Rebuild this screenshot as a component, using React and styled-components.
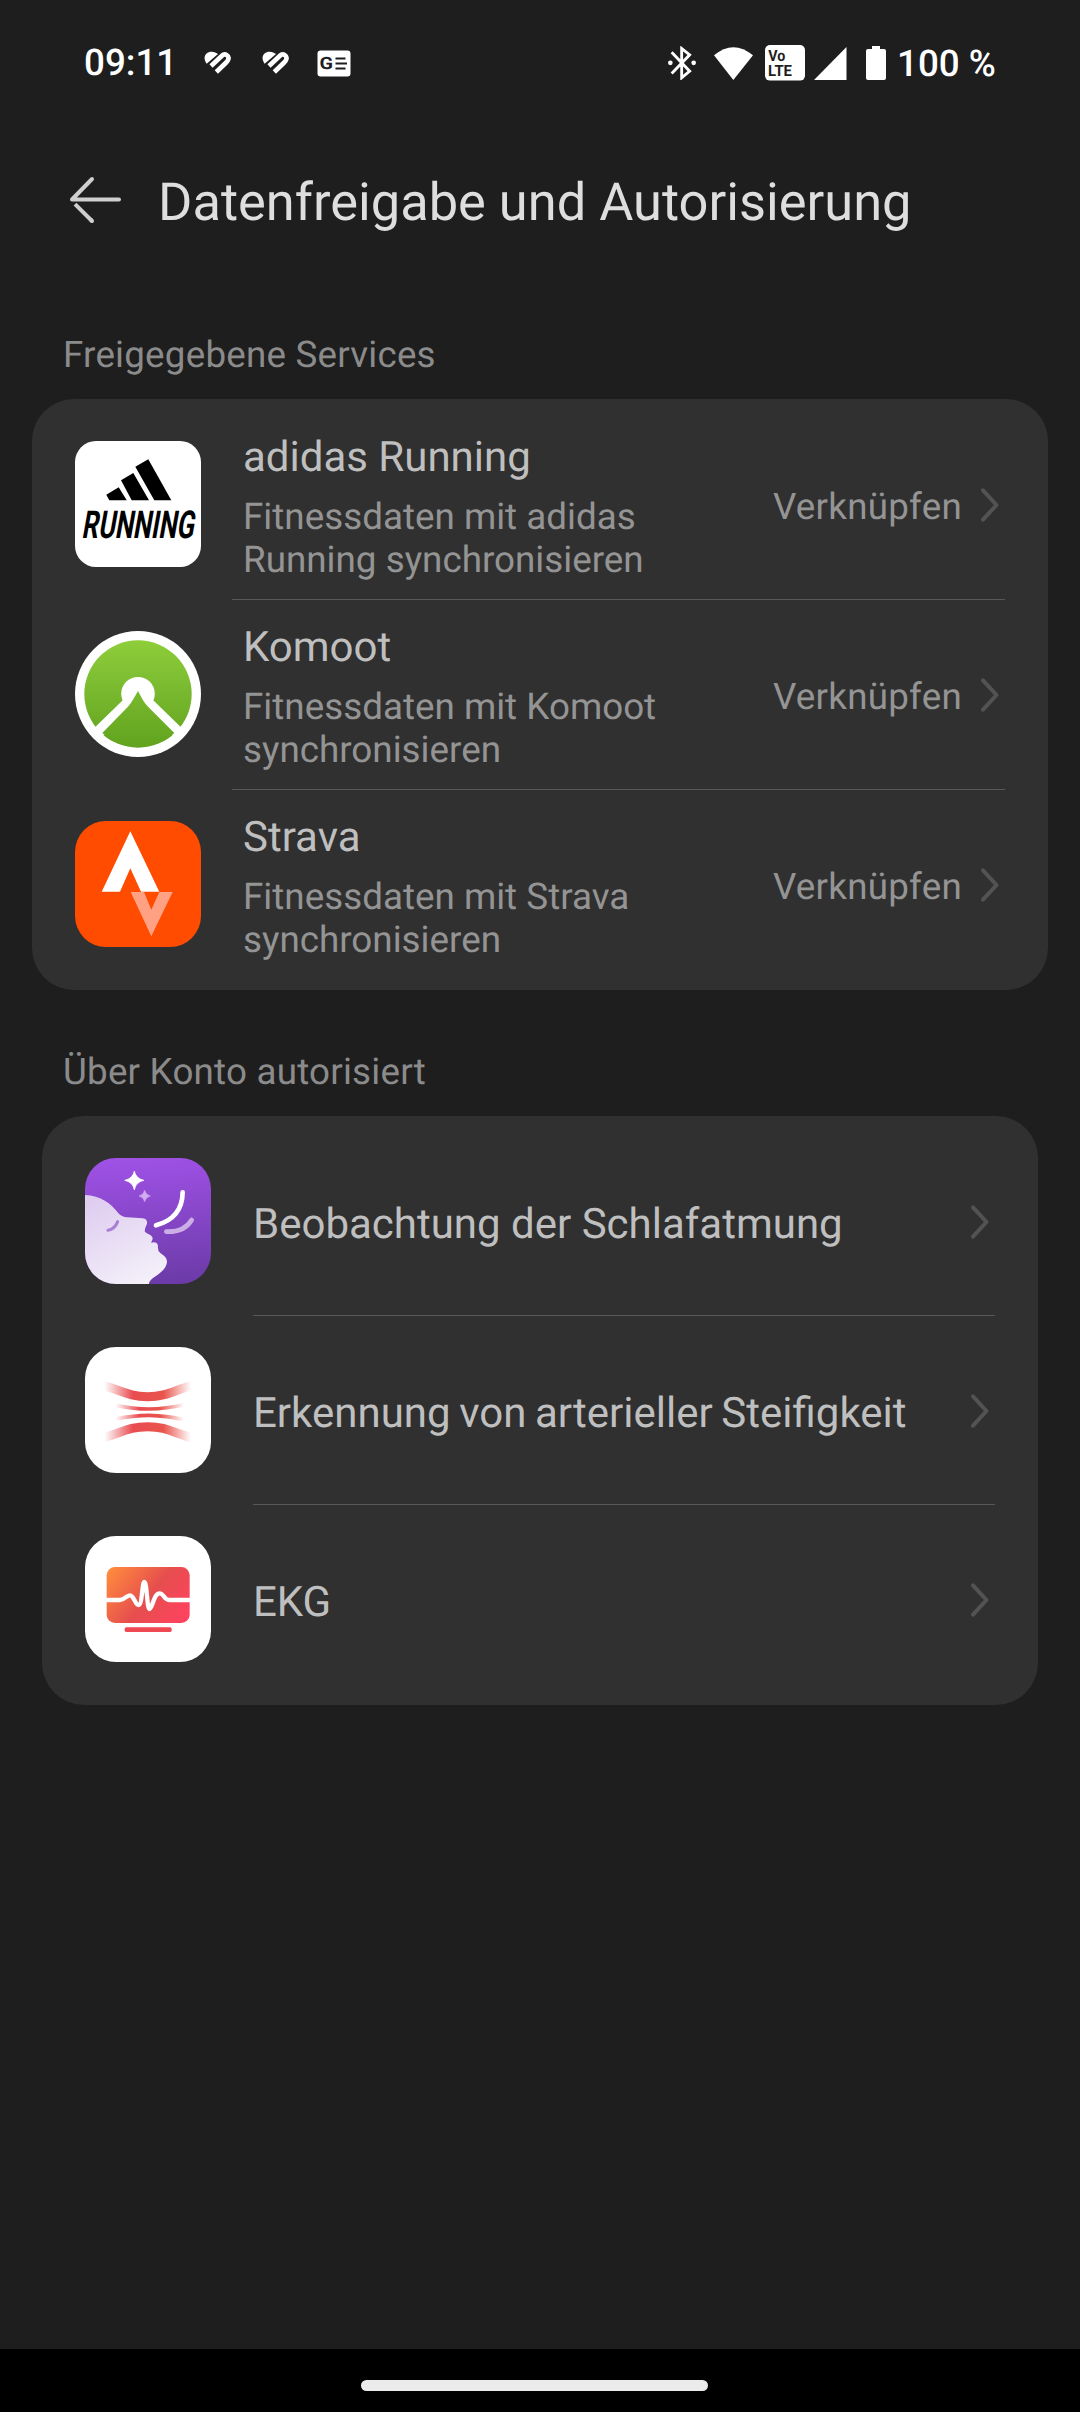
import React from "react";
import styled, { createGlobalStyle } from "styled-components";

const GlobalStyle = createGlobalStyle`
  *, *::before, *::after { box-sizing: border-box; }
  body {
    margin: 0;
    background: #1e1e1e;
    font-family: Roboto, "Noto Sans", sans-serif;
    text-rendering: geometricPrecision;
    font-variant-ligatures: common-ligatures;
  }
  svg { display: block; flex: none; }
`;

const Screen = styled.div`
  width: 1080px;
  height: 2412px;
  display: flex;
  flex-direction: column;
  background: #1e1e1e;
  overflow: hidden;
`;

const StatusBar = styled.div`
  height: 126px;
  padding: 0 84px;
  display: flex;
  justify-content: space-between;
  align-items: center;
  color: #fff;
  font-size: 36.75px;
  font-weight: 500;
  line-height: 44px;
`;

const StatusGroup = styled.div`
  display: flex;
  align-items: center;
`;

const StatusText = styled.span`
  white-space: nowrap;
  width: ${(p) => p.$width}px;
  margin-left: ${(p) => p.$gap || 0}px;
  padding-top: ${(p) => p.$drop || 0}px;
`;

const StatusIcon = styled.svg`
  margin-left: ${(p) => p.$gap || 0}px;
`;

const Header = styled.header`
  height: 150px;
  padding: 0 70px;
  display: flex;
  align-items: center;
  gap: 36px;
`;

const Title = styled.h1`
  margin: 0;
  color: #dedede;
  font-size: 52.4px;
  font-weight: 400;
  line-height: 63px;
  padding-top: 2px;
  white-space: nowrap;
`;

const Content = styled.main`
  flex: 1;
  display: flex;
  flex-direction: column;
`;

const SectionLabel = styled.h2`
  margin: ${(p) => p.$top}px 63px 23px;
  color: #8b8b8b;
  font-size: 36.75px;
  font-weight: 400;
  letter-spacing: 0.22px;
  line-height: 42px;
`;

const Card = styled.section`
  margin: 0 ${(p) => p.$inset}px;
  padding: 11px 43px;
  height: ${(p) => p.$height}px;
  border-radius: 42px;
  background: #303030;
`;

const Divider = styled.div`
  height: 1px;
  background: #575757;
  margin-left: ${(p) => p.$left}px;
`;

const Row = styled.div`
  height: ${(p) => p.$height}px;
  padding-bottom: ${(p) => p.$lift || 0}px;
  display: flex;
  align-items: center;
`;

const AppIcon = styled.svg`
  width: 126px;
  height: 126px;
  overflow: visible;
  border-radius: ${(p) => p.$radius}px;
  background: ${(p) => p.$bg || "#fff"};
  ${(p) => p.$clip && "overflow: hidden;"}
`;

const RowText = styled.div`
  flex: 1;
  margin-left: 42px;
  padding-top: ${(p) => p.$drop}px;
`;

const RowTitle = styled.div`
  color: #bfbfbf;
  font-size: 42px;
  line-height: 49px;
  white-space: nowrap;
  word-spacing: ${(p) => p.$wordSpacing || 0}px;
`;

const RowDetail = styled.div`
  margin-top: 13px;
  width: 460px;
  color: #949494;
  font-size: 36.8px;
  line-height: 43px;
`;

const RowAction = styled.div`
  color: #949494;
  font-size: 36.75px;
  letter-spacing: 0.25px;
  line-height: 42px;
  padding-top: 5px;
  margin-right: 18px;
`;

const ChevronBox = styled.svg`
  margin-right: 5px;
  margin-top: 1px;
`;

const NavBar = styled.footer`
  height: 63px;
  background: #000;
  display: flex;
  justify-content: center;
  padding-top: 31px;
  padding-right: 11px;
`;

const NavHandle = styled.div`
  width: 347px;
  height: 11px;
  border-radius: 6px;
  background: #ebebeb;
`;

const Chevron = () => (
  <ChevronBox width="20" height="36" viewBox="0 0 20 36" fill="none">
    <path d="M3 3.3 16.5 18 3 32.7" stroke="#535353" strokeWidth="4" strokeLinecap="round" strokeLinejoin="round" />
  </ChevronBox>
);

const HealthGlyph = ({ gap }) => (
  <StatusIcon $gap={gap} width="27" height="24" viewBox="433 93 81 72">
    <path d="M441 131 C427 112 438 95 456 95 C464 95 470 98 475 102 Z" fill="#fff" />
    <path d="M454 138 L486 108 C496 98 511 107 505 120 C504 123 501 126 498 129 L470 156" fill="none" stroke="#fff" strokeWidth="14" />
  </StatusIcon>
);

const NewsGlyph = () => (
  <StatusIcon $gap={28} width="34" height="27" viewBox="0 0 34 27">
    <rect x="0.5" y="0.5" width="33" height="26" rx="3" fill="#fff" />
    <text x="2.6" y="19.2" fontFamily="Roboto, sans-serif" fontWeight="700" fontSize="17" textLength="13.5" lengthAdjust="spacingAndGlyphs" fill="#1e1e1e">G</text>
    <path d="M18.5 8.5h10M18.5 13.5h11.5M18.5 18.5h10" stroke="#1e1e1e" strokeWidth="2.2" />
  </StatusIcon>
);

const StatusIcons = () => (
  <>
    <StatusIcon width="28" height="34" viewBox="84 79 84 101">
      <path d="M95 97 L149 154 L125 174 V86 L149 105 L95 161" fill="none" stroke="#fff" strokeWidth="8.5" />
      <circle cx="91" cy="129" r="7" fill="#fff" />
      <circle cx="161" cy="129" r="7" fill="#fff" />
    </StatusIcon>
    <StatusIcon $gap={18} width="39" height="33" viewBox="222 78 117 99">
      <path d="M222 103 Q280 54 339 103 L280 177 Z" fill="#fff" />
    </StatusIcon>
    <StatusIcon $gap={12} width="40" height="36" viewBox="0 0 40 36">
      <rect width="40" height="35.6" rx="5" fill="#fff" />
      <g fill="#1e1e1e" fontFamily="Roboto, sans-serif" fontWeight="700" fontSize="15.5">
        <text x="3.2" y="15.6" textLength="17" lengthAdjust="spacingAndGlyphs">Vo</text>
        <text x="3" y="30.6" textLength="24" lengthAdjust="spacingAndGlyphs">LTE</text>
      </g>
    </StatusIcon>
    <StatusIcon $gap={9} width="33" height="33" viewBox="0 0 33 33">
      <path d="M0 33 32.5 0V33Z" fill="#fff" />
    </StatusIcon>
    <StatusIcon $gap={19} width="20" height="34" viewBox="0 0 20 34">
      <path d="M6 0h8v3h4a2 2 0 0 1 2 2v27a2 2 0 0 1-2 2H2a2 2 0 0 1-2-2V5a2 2 0 0 1 2-2h4Z" fill="#fff" />
    </StatusIcon>
  </>
);

const BackArrow = () => (
  <svg width="52" height="50" viewBox="0 0 52 50" fill="none" stroke="#cfcfcf" strokeWidth="4" strokeLinecap="round">
    <path d="M49 23.5H2L22 3" strokeLinejoin="round" />
    <path d="M5 28.2 22 45" strokeLinecap="butt" />
    <path d="M21 44 22 45" />
  </svg>
);

const AdidasIcon = () => (
  <AppIcon viewBox="0 0 126 126" $radius={21}>
    <path d="M60.3 25.7 73.3 18.3 96.3 59.3H79.3Z M46 39.3 58.3 32 74 59.3H56.7Z M31.3 53.7 43.7 46.3 51.7 59.3H34.3Z" fill="#000" />
    <text transform="translate(6.3 96.7) skewX(-10)" fontFamily="Roboto, sans-serif" fontWeight="700" fontSize="38.5" textLength="112" lengthAdjust="spacingAndGlyphs" fill="#000">RUNNING</text>
  </AppIcon>
);

const KomootIcon = () => (
  <AppIcon viewBox="0 0 126 126" $radius={63} $clip>
    <defs>
      <linearGradient id="komoot" gradientUnits="userSpaceOnUse" x1="63" y1="9" x2="63" y2="117">
        <stop offset="0" stopColor="#8ece3a" />
        <stop offset="0.45" stopColor="#7aba30" />
        <stop offset="1" stopColor="#62a31e" />
      </linearGradient>
    </defs>
    <circle cx="63" cy="63" r="53.7" fill="url(#komoot)" />
    <circle cx="63" cy="62.7" r="16.8" fill="#fff" />
    <path d="M20 96.3 47.5 69.5H78.5L106 96.3 99 104H27Z" fill="#fff" />
    <path d="M63 60 C67 67 69 72 73.3 76 L99.3 102 A53.5 53.5 0 0 1 27.3 102 L52.7 76 C57 71 59 67 63 60Z" fill="url(#komoot)" />
  </AppIcon>
);

const StravaIcon = () => (
  <AppIcon viewBox="0 0 126 126" $radius={31} $bg="#ff4c00" $clip>
    <path d="M55.3 10.3 84.3 70.7H66L55.3 47.3 45 70.7H26.7Z" fill="#fff" />
    <path d="M55.7 71H69L76.3 88.7 84.3 71H97.7L76.3 115.3Z" fill="#ffa182" />
  </AppIcon>
);

const SleepIcon = () => (
  <AppIcon viewBox="165 174 378 378" $radius={31} $bg="linear-gradient(175deg, #a152e8, #6a3aa6)" $clip>
    <defs>
      <linearGradient id="face" x1="0.2" y1="0" x2="0.7" y2="1">
        <stop offset="0" stopColor="#dfcdf0" />
        <stop offset="1" stopColor="#f3f0f9" />
      </linearGradient>
    </defs>
    <path d="M165 285 C212 286 244 312 264 338 Q275 351 292 352 L338 355 Q353 357 351 371 Q345 383 344 394 C350 402 365 404 368 414 Q368 422 363 428 Q381 423 384 437 Q382 452 391 459 C405 469 411 474 411 487 C407 521 356 532 357 552 H165Z" fill="url(#face)" />
    <path d="M234 391 Q254 388 263 365" fill="none" stroke="#a97fd6" strokeWidth="9" strokeLinecap="round" />
    <path d="M378 376 Q457 355 458 277" fill="none" stroke="#fff" strokeWidth="14" strokeLinecap="round" />
    <path d="M409 395 Q463 397 485 360" fill="none" stroke="#ccaee6" strokeWidth="14" strokeLinecap="round" />
    <path d="M313 213 Q318 236 342 241 Q318 246 313 270 Q308 246 284 241 Q308 236 313 213Z" fill="#fff" stroke="#fff" strokeWidth="2" strokeLinejoin="round" />
    <path d="M344 271 Q347 285 361 288 Q347 291 344 305 Q341 291 327 288 Q341 285 344 271Z" fill="#d0acf0" stroke="#d0acf0" strokeWidth="2" strokeLinejoin="round" />
  </AppIcon>
);

const ArteryIcon = () => (
  <AppIcon viewBox="45 51 378 378" $radius={31} $clip>
    <defs>
      <linearGradient id="artery" gradientUnits="userSpaceOnUse" x1="103" y1="0" x2="363" y2="0">
        <stop offset="0" stopColor="#e84c50" stopOpacity="0" />
        <stop offset="0.33" stopColor="#e84c50" />
        <stop offset="0.68" stopColor="#e9544c" />
        <stop offset="1" stopColor="#e9544c" stopOpacity="0" />
      </linearGradient>
      <linearGradient id="arteryThin" gradientUnits="userSpaceOnUse" x1="136" y1="0" x2="342" y2="0">
        <stop offset="0" stopColor="#e84c50" stopOpacity="0" />
        <stop offset="0.35" stopColor="#e84c50" />
        <stop offset="0.65" stopColor="#e9544c" />
        <stop offset="1" stopColor="#e9544c" stopOpacity="0" />
      </linearGradient>
    </defs>
    <g fill="none">
      <path d="M102 167 C155 182 178 200 233 200 C288 200 310 182 364 167" stroke="url(#artery)" strokeWidth="27" />
      <path d="M102 323 C155 308 178 290 233 290 C288 290 310 308 364 323" stroke="url(#artery)" strokeWidth="27" />
      <path d="M136 226 Q190 237 237 237 Q290 236 342 224" stroke="url(#arteryThin)" strokeWidth="11" />
      <path d="M136 267 Q190 256 237 256 Q290 257 342 269" stroke="url(#arteryThin)" strokeWidth="11" />
    </g>
  </AppIcon>
);

const EcgIcon = () => (
  <AppIcon viewBox="45 48 378 378" $radius={31} $clip>
    <defs>
      <linearGradient id="ecg" gradientUnits="userSpaceOnUse" x1="120" y1="150" x2="330" y2="320">
        <stop offset="0" stopColor="#ff8a3d" />
        <stop offset="0.52" stopColor="#e64e4e" />
        <stop offset="1" stopColor="#ff4260" />
      </linearGradient>
    </defs>
    <rect x="110" y="141" width="249" height="168" rx="25" fill="url(#ecg)" />
    <path d="M108 240 H150 C165 240 168 226 180 226 C192 226 195 255 206 255 C217 255 216 186 223 186 C231 186 231 267 238 267 C248 267 250 220 269 220 C281 220 283 240 297 240 H361" fill="none" stroke="#fff" strokeWidth="13" strokeLinejoin="round" />
    <rect x="164" y="322" width="141" height="14" rx="5" fill="#ee4853" />
  </AppIcon>
);

const services = [
  { name: "adidas Running", Icon: AdidasIcon },
  { name: "Komoot", Icon: KomootIcon },
  { name: "Strava", Icon: StravaIcon },
];

const authorized = [
  { name: "Beobachtung der Schlafatmung", Icon: SleepIcon },
  { name: "Erkennung von arterieller Steifigkeit", Icon: ArteryIcon, wordSpacing: -1.8 },
  { name: "EKG", Icon: EcgIcon },
];

export default function App() {
  return (
    <Screen>
      <GlobalStyle />
      <StatusBar>
        <StatusGroup>
          <StatusText $width={93}>09:11</StatusText>
          <HealthGlyph gap={27} />
          <HealthGlyph gap={31} />
          <NewsGlyph />
        </StatusGroup>
        <StatusGroup>
          <StatusIcons />
          <StatusText $width={99} $gap={11} $drop={2}>100 %</StatusText>
        </StatusGroup>
      </StatusBar>
      <Header>
        <BackArrow />
        <Title>Datenfreigabe und Autorisierung</Title>
      </Header>
      <Content>
        <SectionLabel $top={58}>Freigegebene Services</SectionLabel>
        <Card $inset={32} $height={591}>
          {services.map(({ name, Icon }, i) => (
            <React.Fragment key={name}>
              {i > 0 && <Divider $left={157} />}
              <Row $height={189} $lift={1}>
                <Icon />
                <RowText $drop={6}>
                  <RowTitle>{name}</RowTitle>
                  <RowDetail>{`Fitnessdaten mit ${name} synchronisieren`}</RowDetail>
                </RowText>
                <RowAction>Verknüpfen</RowAction>
                <Chevron />
              </Row>
            </React.Fragment>
          ))}
        </Card>
        <SectionLabel $top={61}>Über Konto autorisiert</SectionLabel>
        <Card $inset={42} $height={589}>
          {authorized.map(({ name, Icon, wordSpacing }, i) => (
            <React.Fragment key={name}>
              {i > 0 && <Divider $left={168} />}
              <Row $height={188}>
                <Icon />
                <RowText $drop={6}>
                  <RowTitle $wordSpacing={wordSpacing}>{name}</RowTitle>
                </RowText>
                <Chevron />
              </Row>
            </React.Fragment>
          ))}
        </Card>
      </Content>
      <NavBar>
        <NavHandle />
      </NavBar>
    </Screen>
  );
}
